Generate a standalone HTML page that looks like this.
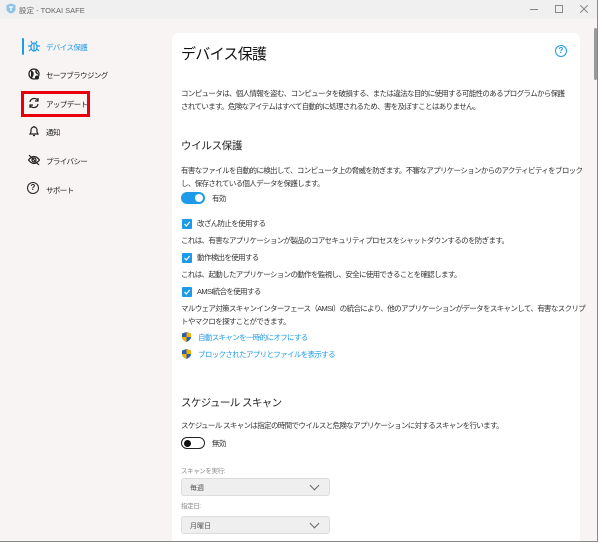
<!DOCTYPE html><html><head><meta charset="utf-8"><style>
*{margin:0;padding:0;box-sizing:border-box}
body{width:600px;height:543px;overflow:hidden;background:#fff;font-family:"Liberation Sans","Noto Sans CJK JP",sans-serif;color:#222;position:relative}
.win{position:absolute;left:0;top:0;width:598px;height:542px;background:#f7f4f3;border-right:1px solid #888;border-bottom:1px solid #888;overflow:hidden}
.tb{position:absolute;left:0;top:0;width:100%;height:19px;background:#f0f0f0;font-size:7.5px;color:#666}
.a{position:absolute;white-space:nowrap}
.card{position:absolute;left:172px;top:33px;width:408px;height:520px;background:#fff;border-radius:7px}
.nav{font-size:7.5px;letter-spacing:-0.6px;color:#222}
.p{font-size:7.5px;letter-spacing:-0.65px;color:#333;line-height:13px}
.cb{position:absolute;width:10px;height:10px;background:#1e9be8;border-radius:1px}
.sel{position:absolute;left:181px;width:149px;height:18px;background:#efefef;border:1px solid #ddd;border-radius:3px;font-size:7px;color:#555;padding:4px 0 0 8px}
.sel:after{content:"";position:absolute;right:11px;top:3px;width:6px;height:6px;border-right:1px solid #666;border-bottom:1px solid #666;transform:rotate(45deg)}
.ic{position:absolute}
</style></head><body><div class="win">
<div class="tb"><svg class="a" style="left:6px;top:3px" width="10" height="11"><path d="M5 0.5L9.5 2V6C9.5 8.5 7 10 5 10.5 3 10 .5 8.5 .5 6V2Z" fill="#8fc3e8"/><path d="M3 4h4M5 4v4" stroke="#fff" stroke-width="1.2"/></svg><span class="a" style="left:19px;top:5px">設定 - TOKAI SAFE</span>
<div class="a" style="left:530px;top:9px;width:8px;height:1px;background:#888"></div><span class="a" style="left:555px;top:5px;width:8px;height:8px;border:1px solid #888"></span>
<svg class="a" style="left:580px;top:5px" width="8" height="8"><path d="M0 0L8 8M8 0L0 8" stroke="#888"/></svg></div>
<div class="a" style="left:22px;top:38px;width:2px;height:17px;background:#1e9be8;border-radius:1px"></div>
<svg class="ic" style="left:28px;top:40px" width="12" height="12" fill="none" stroke="#1e9be8" stroke-width="1.2"><ellipse cx="6" cy="7" rx="3" ry="4"/><path d="M4 3L3 1M8 3L9 1M3 6H0M9 6h3M3 9L1 11M9 9l2 2M6 4v7"/></svg><span class="a nav" style="left:46px;top:42px;color:#1e9be8">デバイス保護</span>
<svg class="ic" style="left:28px;top:68px" width="12" height="12"><circle cx="6" cy="6" r="5" fill="none" stroke="#222" stroke-width="1.3"/><path d="M3 3Q6 4 5 7T3 10M8 2Q7 5 10 6" fill="#222" stroke="#222"/><circle cx="9" cy="9.5" r="2" fill="#222"/></svg><span class="a nav" style="left:46px;top:70px">セーフブラウジング</span>
<div class="a" style="left:21px;top:91px;width:69px;height:26px;border:3px solid #e8000b"></div>
<svg class="ic" style="left:28px;top:97px" width="12" height="12" fill="none" stroke="#222" stroke-width="1.2"><path d="M2 5A4.2 4.2 0 0 1 10 4M10 1v3H7M10 7A4.2 4.2 0 0 1 2 8M2 11V8h3"/></svg><span class="a nav" style="left:46px;top:99px">アップデート</span>
<svg class="ic" style="left:28px;top:125px" width="12" height="12" fill="none" stroke="#222" stroke-width="1.2"><path d="M2 9h8L9 7V5A3 3 0 0 0 3 5v2ZM5 10.5h2M6 1v1"/></svg><span class="a nav" style="left:46px;top:127px">通知</span>
<svg class="ic" style="left:28px;top:154px" width="12" height="12" fill="none" stroke="#222" stroke-width="1.2"><path d="M0.5 6Q6 -1 11.5 6Q6 13 0.5 6Z"/><circle cx="6" cy="6" r="2"/><path d="M1 1L11 11"/></svg><span class="a nav" style="left:46px;top:156px">プライバシー</span>
<span class="a" style="left:27px;top:182px;width:12px;height:12px;border:1.3px solid #222;border-radius:50%;font-size:8px;text-align:center;line-height:10px;font-weight:bold">?</span><span class="a nav" style="left:46px;top:185px">サポート</span>
<div class="card"></div>
<span class="a" style="left:181px;top:43px;font-size:15px;letter-spacing:-0.7px;color:#111">デバイス保護</span>
<span class="a" style="left:555px;top:45px;width:12px;height:12px;border:1.5px solid #1e9be8;border-radius:50%;color:#1e9be8;font-size:8px;text-align:center;line-height:9px;font-weight:bold">?</span>
<div class="a p" style="left:181px;top:87px">コンピュータは、個人情報を盗む、コンピュータを破損する、または違法な目的に使用する可能性のあるプログラムから保護<br>されています。危険なアイテムはすべて自動的に処理されるため、害を及ぼすことはありません。</div>
<span class="a" style="left:181px;top:138px;font-size:10.5px;letter-spacing:-0.3px">ウイルス保護</span>
<div class="a p" style="left:181px;top:164px">有害なファイルを自動的に検出して、コンピュータ上の脅威を防ぎます。不審なアプリケーションからのアクティビティをブロック<br>し、保存されている個人データを保護します。</div>
<div class="a" style="left:181px;top:192px;width:24px;height:12px;background:#1e9be8;border-radius:6px"><div class="a" style="left:14px;top:2px;width:8px;height:8px;background:#fff;border-radius:50%"></div></div>
<span class="a p" style="left:212px;top:192px">有効</span>
<svg class="cb" style="left:182px;top:219px" viewBox="0 0 10 10"><path d="M2.5 5L4.3 7 7.7 3" fill="none" stroke="#fff" stroke-width="1.2"/></svg><span class="a p" style="left:197px;top:217px">改ざん防止を使用する</span>
<span class="a p" style="left:181px;top:234px">これは、有害なアプリケーションが製品のコアセキュリティプロセスをシャットダウンするのを防ぎます。</span>
<svg class="cb" style="left:182px;top:253px" viewBox="0 0 10 10"><path d="M2.5 5L4.3 7 7.7 3" fill="none" stroke="#fff" stroke-width="1.2"/></svg><span class="a p" style="left:197px;top:251px">動作検出を使用する</span>
<span class="a p" style="left:181px;top:268px">これは、起動したアプリケーションの動作を監視し、安全に使用できることを確認します。</span>
<svg class="cb" style="left:182px;top:287px" viewBox="0 0 10 10"><path d="M2.5 5L4.3 7 7.7 3" fill="none" stroke="#fff" stroke-width="1.2"/></svg><span class="a p" style="left:197px;top:285px">AMSI統合を使用する</span>
<div class="a p" style="left:181px;top:302px">マルウェア対策スキャンインターフェース（AMSI）の統合により、他のアプリケーションがデータをスキャンして、有害なスクリプ<br>トやマクロを探すことができます。</div>
<svg class="a" style="left:182px;top:332px" width="9" height="10"><path d="M4.5 0L9 1.5V5C9 7.5 6.5 9 4.5 10 2.5 9 0 7.5 0 5V1.5Z" fill="#2a5db0"/><path d="M4.5 0L9 1.5V5H4.5ZM4.5 5H0C0 7.5 2.5 9 4.5 10Z" fill="#f2b400"/></svg><span class="a p" style="left:198px;top:331px;color:#1e9be8">自動スキャンを一時的にオフにする</span>
<svg class="a" style="left:182px;top:349px" width="9" height="10"><path d="M4.5 0L9 1.5V5C9 7.5 6.5 9 4.5 10 2.5 9 0 7.5 0 5V1.5Z" fill="#2a5db0"/><path d="M4.5 0L9 1.5V5H4.5ZM4.5 5H0C0 7.5 2.5 9 4.5 10Z" fill="#f2b400"/></svg><span class="a p" style="left:198px;top:348px;color:#1e9be8">ブロックされたアプリとファイルを表示する</span>
<span class="a" style="left:181px;top:395px;font-size:10.5px;letter-spacing:-0.6px">スケジュール スキャン</span>
<span class="a p" style="left:181px;top:419px">スケジュール スキャンは指定の時間でウイルスと危険なアプリケーションに対するスキャンを行います。</span>
<div class="a" style="left:181px;top:437px;width:24px;height:12px;border:1.2px solid #222;border-radius:6px"><div class="a" style="left:2px;top:1.5px;width:7px;height:7px;background:#111;border-radius:50%"></div></div>
<span class="a p" style="left:212px;top:437px">無効</span>
<span class="a" style="left:181px;top:465px;font-size:6.5px;letter-spacing:-0.4px;color:#888">スキャンを実行:</span>
<div class="sel" style="top:478px">毎週</div>
<span class="a" style="left:181px;top:500px;font-size:6.5px;letter-spacing:-0.4px;color:#888">指定日:</span>
<div class="sel" style="top:516px">月曜日</div>
<div class="a" style="left:594px;top:28px;width:3px;height:52px;background:#999;border-radius:2px"></div>
</div></body></html>
